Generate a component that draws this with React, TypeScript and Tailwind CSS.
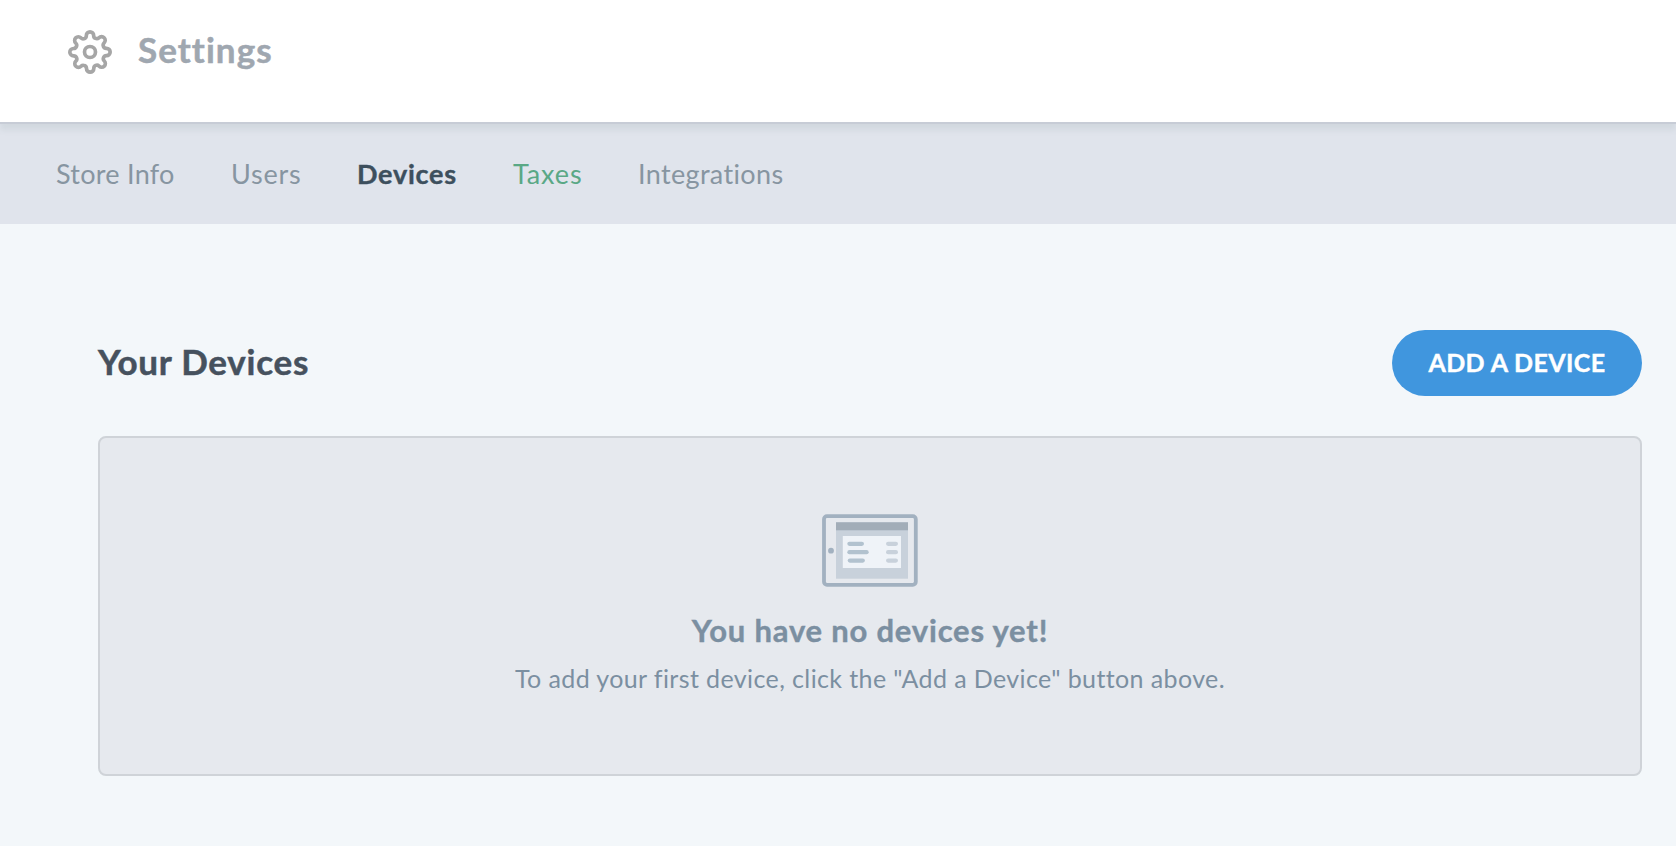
import React, { useState } from 'react';
import { FiSettings } from 'react-icons/fi';

const tabs = [
  { id: 'store-info', label: 'Store Info', width: 'w-[119px]', tracking: 'tracking-[0.27px]' },
  { id: 'users', label: 'Users', width: 'w-[70px]', tracking: 'tracking-[0.8px]' },
  { id: 'devices', label: 'Devices', width: 'w-[100px]', tracking: 'tracking-[0.75px]' },
  { id: 'taxes', label: 'Taxes', width: 'w-[69px]', tracking: 'tracking-[0.9px]' },
  { id: 'integrations', label: 'Integrations', width: 'w-[146px]', tracking: 'tracking-[0.35px]' },
];

const DeviceIcon: React.FC = () => (
  <svg width="96" height="73" viewBox="0 0 96 73" fill="none">
    <rect x="2" y="2.2" width="91.8" height="68.6" rx="3" stroke="#a2b1c0" strokeWidth="3.8" />
    <circle cx="9" cy="36.7" r="2.9" fill="#a2b1c0" />
    <rect x="14" y="8.3" width="72" height="56.4" fill="#c8d1db" />
    <rect x="14" y="8.3" width="72" height="8" fill="#a2adb8" />
    <rect x="20.8" y="22" width="58.2" height="32" fill="#eff3f8" />
    <g fill="#b2c2cf">
      <rect x="25.3" y="27.7" width="16.7" height="4.3" rx="2.15" />
      <rect x="25.3" y="36" width="21.4" height="4.3" rx="2.15" />
      <rect x="25.7" y="44.4" width="17.2" height="4.3" rx="2.15" />
    </g>
    <g fill="#c8d1db">
      <rect x="64" y="27.7" width="12" height="4.3" rx="2.15" />
      <rect x="64" y="36" width="12" height="4.3" rx="2.15" />
      <rect x="64" y="44.4" width="12" height="4.3" rx="2.15" />
    </g>
  </svg>
);

const App: React.FC = () => {
  const [activeTab, setActiveTab] = useState('devices');

  const tabColor = (id: string) => {
    if (id === activeTab) return 'font-bold text-[#3d4f5d] [-webkit-text-stroke:0.4px]';
    if (id === 'taxes') return 'text-[#5aa886]';
    return 'text-[#8795a1]';
  };

  return (
    <div className="h-screen overflow-hidden bg-[#f3f7fa] font-['Lato',sans-serif]">
      <header className="relative z-10 flex h-[124px] items-start border-b-2 border-[#c7ccd6] bg-white pt-[30px] pl-[68px] shadow-[0_6px_6px_rgba(90,115,115,0.1)]">
        <FiSettings className="h-11 w-11 text-[#a6a6a6]" />
        <h1 className="-mt-px ml-[26px] text-[35px] leading-[40px] font-bold tracking-[1.05px] text-[#9fa7b0] [-webkit-text-stroke:0.5px]">
          Settings
        </h1>
      </header>

      <nav className="flex h-[100px] items-center gap-14 bg-[#e0e4ec] pl-14 text-[27px] leading-8">
        {tabs.map((tab) => (
          <button
            key={tab.id}
            onClick={() => setActiveTab(tab.id)}
            className={`text-left whitespace-nowrap ${tab.width} ${tab.tracking} ${tabColor(tab.id)}`}
          >
            {tab.label}
          </button>
        ))}
      </nav>

      <main className="pt-[106px] pr-[34px] pl-[98px]">
        <div className="flex items-center justify-between">
          <h2 className="pb-[5px] text-[35px] leading-[40px] font-bold tracking-[0.75px] text-[#46515e] [-webkit-text-stroke:0.5px]">
            Your Devices
          </h2>
          <button className="h-[66px] w-[250px] rounded-full bg-[#4096de] text-[25px] font-bold tracking-[0.4px] whitespace-nowrap text-white [-webkit-text-stroke:0.4px]">
            ADD A DEVICE
          </button>
        </div>

        <section className="mt-10 flex h-[340px] flex-col items-center rounded-lg border-2 border-[#cfd3d8] bg-[#e6e9ee] pt-[76px]">
          <DeviceIcon />
          <h3 className="mt-[23px] text-[31px] leading-10 font-bold tracking-[0.8px] text-[#7b8fa1] [-webkit-text-stroke:0.4px]">
            You have no devices yet!
          </h3>
          <p className="mt-2 text-[25px] leading-10 tracking-[0.39px] text-[#7b8fa1]">
            To add your first device, click the "Add a Device" button above.
          </p>
        </section>
      </main>
    </div>
  );
};

export default App;
